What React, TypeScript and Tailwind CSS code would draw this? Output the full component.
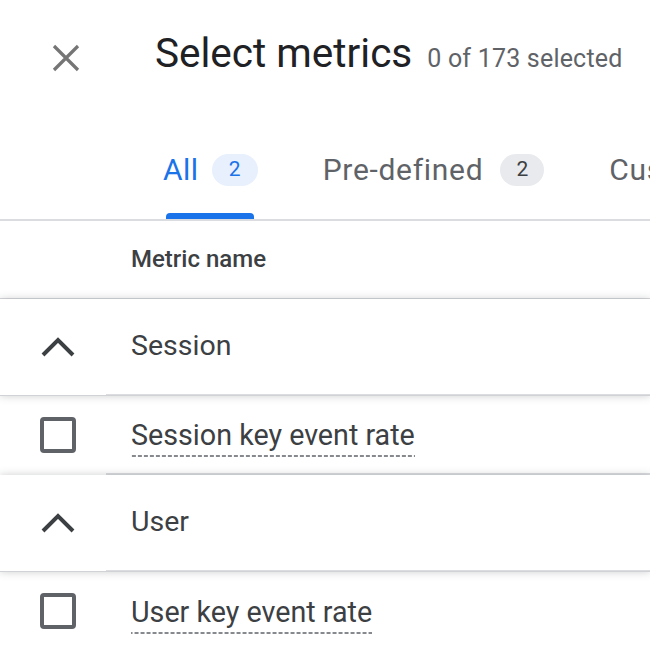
import React from "react";

const font = { fontFamily: "Roboto, 'Noto Sans', Arial, sans-serif" };

function CloseIcon() {
  return (
    <svg width="32" height="32" viewBox="0 0 32 32" className="mt-[13px] ml-[50px] shrink-0">
      <path d="M4 4L28 28M28 4L4 28" stroke="#757575" strokeWidth="3.2" fill="none" />
    </svg>
  );
}

function Chevron() {
  return (
    <svg width="40" height="24" viewBox="0 0 40 24">
      <polyline points="5,20 20,5 35,20" fill="none" stroke="#3c4043" strokeWidth="4" strokeLinejoin="miter" />
    </svg>
  );
}

function Checkbox() {
  return <div className="w-[36px] h-[36px] rounded-[4px] border-[4px] border-[#5f6368] box-border" />;
}

function GroupRow({ label }: { label: string }) {
  return (
    <div className="relative z-10 flex h-[97px] bg-white shadow-[0_0_8px_rgba(60,64,67,0.25)] border-b border-[#d0d2d6]">
      <div className="w-[106px] flex items-center justify-center pl-[10px]">
        <Chevron />
      </div>
      <div className="flex-1 flex items-center pl-[25px] border-b border-[#dadce0] text-[28.5px] text-[#3c4043]">
        {label}
      </div>
    </div>
  );
}

function MetricRow({ label, last }: { label: string; last?: boolean }) {
  return (
    <div className="flex h-[79px] bg-white">
      <div className="w-[106px] flex items-center justify-center pl-[10px]">
        <Checkbox />
      </div>
      <div
        className={
          last
            ? "flex-1 flex items-center pl-[25px]"
            : "flex-1 flex items-center pl-[25px] border-b-2 border-[#dadce0]"
        }
      >
        <span className="inline-block text-[28.7px] leading-[34px] pt-[7px] pb-[5px] text-[#3c4043] bg-[linear-gradient(to_right,#868a8f_65%,transparent_0)] bg-[length:6px_2px] bg-repeat-x bg-bottom">
          {label}
        </span>
      </div>
    </div>
  );
}

export default function App() {
  return (
    <div className="w-[650px] h-[662px] overflow-hidden bg-white" style={font}>
      <div className="flex items-start pt-[29px]">
        <CloseIcon />
        <div className="flex items-baseline ml-[73px] whitespace-nowrap">
          <span className="text-[40.5px] leading-[48px] text-[#202124]">Select metrics</span>
          <span className="ml-[15px] text-[25px] text-[#5f6368] tracking-[0.2px]">0 of 173 selected</span>
        </div>
      </div>

      <div className="mt-[76px] flex items-end pl-[163px] border-b-2 border-[#dadce0] whitespace-nowrap">
        <div className="flex flex-col">
          <div className="flex items-center h-[32px]">
            <span className="text-[30px] leading-[36px] text-[#1a73e8] tracking-[0.5px]">All</span>
            <span className="ml-[13px] w-[46px] h-[32px] rounded-full bg-[#e8f0fe] text-[#1a73e8] text-[21px] flex items-center justify-center">2</span>
          </div>
          <div className="mt-[27px] ml-[3px] w-[88px] h-[6px] rounded-t-[4px] bg-[#1a73e8]" />
        </div>
        <div className="flex flex-col ml-[65px]">
          <div className="flex items-center h-[32px]">
            <span className="text-[30px] leading-[36px] text-[#5f6368] tracking-[0.7px]">Pre-defined</span>
            <span className="ml-[17px] w-[44px] h-[32px] rounded-full bg-[#e8eaed] text-[#3c4043] text-[21px] flex items-center justify-center">2</span>
          </div>
          <div className="mt-[27px] h-[6px]" />
        </div>
        <div className="flex flex-col ml-[65px]">
          <div className="flex items-center h-[32px]">
            <span className="text-[30px] leading-[36px] text-[#5f6368] tracking-[0.7px]">Custom</span>
          </div>
          <div className="mt-[27px] h-[6px]" />
        </div>
      </div>

      <div className="flex items-center h-[77px] pl-[131px] text-[24px] font-medium text-[#3c4043]">
        Metric name
      </div>

      <div className="border-t border-[#d6d8db]">
        <GroupRow label="Session" />
        <MetricRow label="Session key event rate" />
        <GroupRow label="User" />
        <MetricRow label="User key event rate" last />
      </div>
    </div>
  );
}
